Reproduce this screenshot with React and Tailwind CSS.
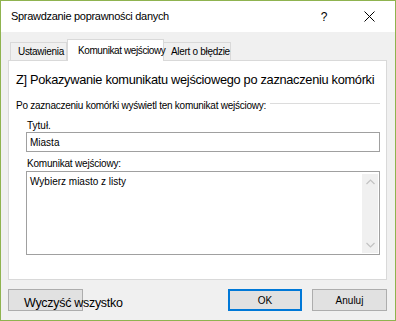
import React from "react";

export default function App() {
  const f = { fontFamily: '"Liberation Sans", Arial, sans-serif' };
  return (
    <div
      className="w-[396px] h-[321px] border border-[#8fb34f] bg-[#f0f0f0] flex flex-col text-black overflow-hidden"
      style={f}
    >
      {/* title bar */}
      <div className="h-[31px] bg-white flex items-center shrink-0">
        <div className="pl-[10px] text-[11px] tracking-[-0.3px] flex-1">
          Sprawdzanie poprawności danych
        </div>
        <div className="w-[12px] text-[12px] text-center mr-[34px]">?</div>
        <svg width="11" height="11" viewBox="0 0 11 11" className="mr-[20px]">
          <path d="M0.5 0.5 L10.5 10.5 M10.5 0.5 L0.5 10.5" stroke="#000" strokeWidth="1" />
        </svg>
      </div>

      <div className="flex-1 flex flex-col px-[7px]">
        {/* tabs */}
        <div className="mt-[7px] h-[21px] flex items-end pl-[2px] text-[10px] tracking-[-0.3px]">
          <div className="h-[18px] w-[57px] border border-b-0 border-[#d9d9d9] flex items-center pl-[7px]">
            Ustawienia
          </div>
          <div className="h-[22px] w-[97px] -mb-[1px] relative z-10 bg-white border border-b-0 border-[#d9d9d9] flex items-center pl-[10px] whitespace-nowrap tracking-[-0.4px]">
            Komunikat wejściowy
          </div>
          <div className="h-[18px] w-[67px] border border-b-0 border-l-0 border-[#d9d9d9] flex items-center pl-[7px] whitespace-nowrap">
            Alert o błędzie
          </div>
        </div>

        {/* panel */}
        <div className="w-[379px] h-[220px] border border-[#d9d9d9] bg-white flex flex-col pl-[7px] pr-[6px]">
          <div className="mt-[10px] h-[18px] leading-[18px] text-[12.8px] tracking-[-0.3px] whitespace-nowrap">
            Z] Pokazywanie komunikatu wejściowego po zaznaczeniu komórki
          </div>
          <div className="mt-[10px] h-[14px] flex items-start text-[10px] tracking-[-0.25px] leading-[14px]">
            <span className="whitespace-nowrap">Po zaznaczeniu komórki wyświetl ten komunikat wejściowy:</span>
            <div className="flex-1 ml-[4px] mt-[4px] h-px bg-[#dcdcdc]" />
          </div>
          <div className="pl-[10px] flex flex-col">
            <div className="mt-[7px] h-[12px] leading-[12px] text-[10px] pl-[1px]">Tytuł.</div>
            <div className="mt-0 h-[20px] border border-[#a0a0a0] flex items-center pl-[3px] text-[10px]">
              Miasta
            </div>
            <div className="mt-[6px] h-[12px] leading-[12px] text-[10px] pl-[1px] tracking-[-0.2px]">
              Komunikat wejściowy:
            </div>
            <div className="mt-px h-[84px] border border-[#a0a0a0] flex">
              <div className="flex-1 pl-[3px] pt-[4px] leading-[12px] text-[10px]">
                Wybierz miasto z listy
              </div>
              <div className="w-[16px] mt-[2px] mb-[1px] mr-px bg-[#f0f0f0] flex flex-col items-center justify-between py-[5px]">
                <svg width="9" height="6" viewBox="0 0 9 6">
                  <path d="M0.5 5 L4.5 1 L8.5 5" fill="none" stroke="#c2c2c2" strokeWidth="1.2" />
                </svg>
                <svg width="9" height="6" viewBox="0 0 9 6">
                  <path d="M0.5 1 L4.5 5 L8.5 1" fill="none" stroke="#c2c2c2" strokeWidth="1.2" />
                </svg>
              </div>
            </div>
          </div>
        </div>

        {/* buttons */}
        <div className="mt-[9px] flex items-start">
          <div className="w-[75px] h-[22px] bg-[#e1e1e1] border border-[#adadad] pl-[15px] pt-[5px] text-[12.5px] leading-[16px] whitespace-nowrap tracking-[-0.3px]">
            Wyczyść wszystko
          </div>
          <div className="flex-1" />
          <div className="w-[74px] h-[22px] bg-[#e1e1e1] border-2 border-[#0078d7] flex items-center justify-center text-[10px]">
            OK
          </div>
          <div className="w-[75px] h-[22px] ml-[10px] mr-[1px] bg-[#e1e1e1] border border-[#adadad] flex items-center justify-center text-[10px]">
            Anuluj
          </div>
        </div>
      </div>
    </div>
  );
}
